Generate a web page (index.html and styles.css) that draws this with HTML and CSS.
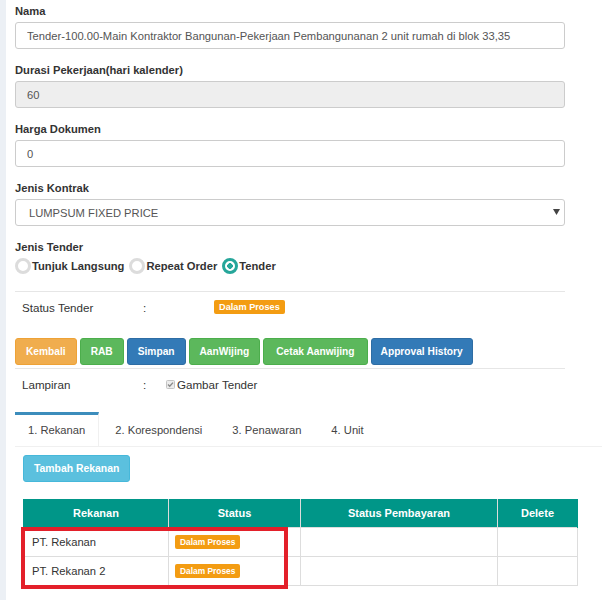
FILE: index.html
```html
<!DOCTYPE html>
<html lang="id">
<head>
<meta charset="utf-8">
<title>Tender</title>
<link rel="stylesheet" href="styles.css">
</head>
<body>
<div class="page">
  <div class="edge"></div>
  <main class="main">
    <div class="form">
      <div class="field">
        <label class="lbl">Nama</label>
        <input class="control" type="text" value="Tender-100.00-Main Kontraktor Bangunan-Pekerjaan Pembangunanan 2 unit rumah di blok 33,35" readonly>
      </div>
      <div class="field">
        <label class="lbl">Durasi Pekerjaan(hari kalender)</label>
        <input class="control control-disabled" type="text" value="60" disabled>
      </div>
      <div class="field">
        <label class="lbl">Harga Dokumen</label>
        <input class="control" type="text" value="0" readonly>
      </div>
      <div class="field">
        <label class="lbl">Jenis Kontrak</label>
        <div class="select-wrap">
          <select class="control select"><option>LUMPSUM FIXED PRICE</option></select>
          <svg class="caret" width="7" height="6" viewBox="0 0 7 6"><path d="M0 0H7L3.5 6Z" fill="#444"/></svg>
        </div>
      </div>
      <div class="field field-radios">
        <label class="lbl">Jenis Tender</label>
        <div class="radios">
          <span class="radio-item"><span class="radio"></span>Tunjuk Langsung</span>
          <span class="radio-item"><span class="radio"></span>Repeat Order</span>
          <span class="radio-item"><span class="radio radio-on"></span>Tender</span>
        </div>
      </div>

      <div class="info-row status-row">
        <span class="info-key">Status Tender</span>
        <span class="info-colon">:</span>
        <span class="badge badge-lg">Dalam Proses</span>
      </div>

      <div class="actions">
        <button class="btn btn-warning">Kembali</button>
        <button class="btn btn-success">RAB</button>
        <button class="btn btn-primary">Simpan</button>
        <button class="btn btn-success">AanWijing</button>
        <button class="btn btn-success btn-wide">Cetak Aanwijing</button>
        <button class="btn btn-primary btn-tight">Approval History</button>
      </div>

      <div class="info-row lamp-row">
        <span class="info-key">Lampiran</span>
        <span class="info-colon info-colon-narrow">:</span>
        <span class="check-item">
          <svg class="check" width="9" height="9" viewBox="0 0 9 9"><rect x="0.5" y="0.5" width="8" height="8" rx="1" fill="#ececec" stroke="#c4c4c4"/><path d="M2 4.6L3.7 6.3L7 2.6" fill="none" stroke="#8a8a8a" stroke-width="1.4"/></svg>Gambar Tender
        </span>
      </div>
    </div>

    <ul class="tabs">
      <li class="tab tab-active">1. Rekanan</li>
      <li class="tab">2. Korespondensi</li>
      <li class="tab">3. Penawaran</li>
      <li class="tab">4. Unit</li>
    </ul>

    <div class="pane">
      <button class="btn btn-info">Tambah Rekanan</button>
      <div class="table-wrap">
        <table class="grid">
          <colgroup>
            <col class="c1"><col class="c2"><col class="c3"><col class="c4">
          </colgroup>
          <thead>
            <tr><th>Rekanan</th><th>Status</th><th>Status Pembayaran</th><th>Delete</th></tr>
          </thead>
          <tbody>
            <tr><td>PT. Rekanan</td><td><span class="badge">Dalam Proses</span></td><td></td><td></td></tr>
            <tr><td>PT. Rekanan 2</td><td><span class="badge">Dalam Proses</span></td><td></td><td></td></tr>
          </tbody>
        </table>
        <div class="highlight"></div>
      </div>
    </div>
  </main>
</div>
</body>
</html>
```

FILE: styles.css
```css
* { box-sizing: border-box; }

html, body {
  margin: 0;
  padding: 0;
  background: #fff;
}

body {
  font-family: "Liberation Sans", Arial, sans-serif;
  font-size: 11.2px;
  color: #333;
  overflow: hidden;
}

.page {
  display: flex;
  min-height: 600px;
}

.edge {
  width: 6px;
  flex: 0 0 6px;
  background: #ecf0f5;
}

.main {
  flex: 1;
  padding: 3px 0 0 9px;
  min-width: 0;
}

.form {
  width: 550px;
}

.field {
  margin-bottom: 13px;
}

.lbl {
  display: block;
  height: 17px;
  line-height: 17px;
  margin-bottom: 2px;
  font-weight: bold;
  font-size: 11.2px;
  color: #333;
}

.control {
  display: block;
  width: 100%;
  height: 27px;
  padding: 0 11px;
  border: 1px solid #ccc;
  border-radius: 3px;
  font-family: "Liberation Sans", Arial, sans-serif;
  font-size: 11.2px;
  color: #555;
  background: #fff;
  outline: none;
}

.control-disabled {
  background: #eee;
  color: #555;
  -webkit-text-fill-color: #555;
  opacity: 1;
}

.select-wrap {
  position: relative;
}

.select {
  appearance: none;
  -webkit-appearance: none;
  padding-left: 13px;
}

.caret {
  position: absolute;
  right: 5px;
  top: 10px;
}

.field-radios {
  margin-bottom: 17px;
}

.radios {
  display: flex;
  align-items: center;
  height: 16px;
  font-weight: bold;
}

.radio-item {
  display: inline-flex;
  align-items: center;
  margin-right: 5px;
}

.radio {
  width: 16px;
  height: 16px;
  border-radius: 50%;
  border: 3px solid #dcdcdc;
  background: #fff;
  margin-right: 1px;
}

.radio-on {
  border-color: #26a69a;
  background: radial-gradient(circle, #26a69a 0 2.6px, #fff 3px);
}

.info-row {
  display: flex;
  align-items: center;
  height: 31px;
  padding-left: 7px;
  border-top: 1px solid #e6e6e6;
  font-size: 11.6px;
}

.info-key {
  width: 121px;
}

.info-colon {
  width: 71px;
}

.info-colon-narrow {
  width: 23px;
}

.check-item {
  display: inline-flex;
  align-items: center;
}

.check {
  margin-right: 2px;
}

.badge {
  display: inline-block;
  background: #f39c12;
  color: #fff;
  font-weight: bold;
  font-size: 8.4px;
  line-height: 14px;
  height: 14px;
  padding: 0 5px;
  border-radius: 2px;
}

.badge-lg {
  font-size: 9.2px;
  padding: 0 5px;
}

.actions {
  display: flex;
  gap: 3px;
  margin-top: 16px;
  margin-bottom: 3px;
}

.btn {
  height: 27px;
  padding: 0 10px;
  border: 1px solid transparent;
  border-radius: 3px;
  font-family: "Liberation Sans", Arial, sans-serif;
  font-weight: bold;
  font-size: 10.2px;
  color: #fff;
  cursor: pointer;
}

.btn-wide { padding: 0 12px; }
.btn-tight { padding: 0 9px; }

.btn-warning { background: #f0ad4e; border-color: #eea236; }
.btn-success { background: #5cb85c; border-color: #4cae4c; }
.btn-primary { background: #337ab7; border-color: #2e6da4; }
.btn-info { background: #5bc0de; border-color: #46b8da; font-size: 10.4px; }

.tabs {
  display: flex;
  list-style: none;
  margin: 13px 0 0 0;
  padding: 0;
  border-bottom: 1px solid #f0f0f0;
}

.tab {
  height: 34px;
  line-height: 31px;
  padding: 0 13px;
  margin-right: 4px;
  border-top: 3px solid transparent;
  color: #444;
  font-size: 11.2px;
}

.tab-active {
  border-top-color: #3c8dbc;
  border-right: 1px solid #f0f0f0;
  margin-right: 3px;
}

.pane {
  padding: 8px 0 0 8px;
}

.table-wrap {
  position: relative;
  margin-top: 17px;
  width: 554px;
}

.grid {
  width: 554px;
  border-collapse: collapse;
  table-layout: fixed;
}

.c1 { width: 145px; }
.c2 { width: 132px; }
.c3 { width: 197px; }
.c4 { width: 80px; }

.grid th {
  height: 28px;
  background: #009688;
  color: #fff;
  font-weight: bold;
  font-size: 11px;
  text-align: center;
  border: 1px solid #dcdcdc;
  border-top: none;
  border-bottom: none;
}

.grid th:first-child { border-left-color: #009688; }
.grid th:last-child { border-right-color: #009688; }

.grid td {
  height: 29px;
  padding: 0 6px;
  border: 1px solid #ddd;
  vertical-align: middle;
}

.grid td:first-child {
  padding-left: 8px;
}

.highlight {
  position: absolute;
  left: -2px;
  top: 28px;
  width: 267px;
  height: 62px;
  border: 4px solid #e3202a;
}
```
